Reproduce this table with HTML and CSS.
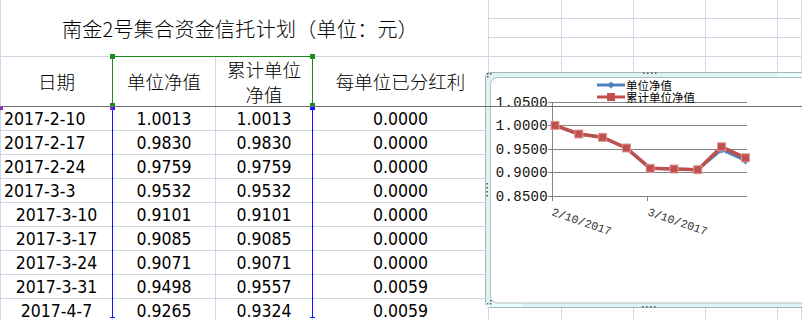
FILE: index.html
```html
<!DOCTYPE html>
<html lang="zh">
<head>
<meta charset="utf-8">
<title>南金2号集合资金信托计划</title>
<link rel="stylesheet" href="styles.css">
</head>
<body>
<div class="sheet">
  <div class="grid">
    <div class="cell first title">南金2号集合资金信托计划（单位：元）</div>
    <div class="cell"></div><div class="cell"></div><div class="cell"></div><div class="cell"></div><div class="cell"></div>
    <div class="cell"></div><div class="cell"></div><div class="cell"></div><div class="cell"></div><div class="cell"></div>
    <div class="cell"></div><div class="cell"></div><div class="cell"></div><div class="cell"></div><div class="cell"></div>

    <div class="cell first head">日期</div>
    <div class="cell head">单位净值</div>
    <div class="cell head">累计单位净值</div>
    <div class="cell head">每单位已分红利</div>
    <div class="cell"></div><div class="cell"></div><div class="cell"></div><div class="cell"></div><div class="cell"></div>

    <div class="cell first num left">2017-2-10</div><div class="cell num">1.0013</div><div class="cell num">1.0013</div><div class="cell num">0.0000</div>
    <div class="cell"></div><div class="cell"></div><div class="cell"></div><div class="cell"></div><div class="cell"></div>
    <div class="cell first num left">2017-2-17</div><div class="cell num">0.9830</div><div class="cell num">0.9830</div><div class="cell num">0.0000</div>
    <div class="cell"></div><div class="cell"></div><div class="cell"></div><div class="cell"></div><div class="cell"></div>
    <div class="cell first num left">2017-2-24</div><div class="cell num">0.9759</div><div class="cell num">0.9759</div><div class="cell num">0.0000</div>
    <div class="cell"></div><div class="cell"></div><div class="cell"></div><div class="cell"></div><div class="cell"></div>
    <div class="cell first num left">2017-3-3</div><div class="cell num">0.9532</div><div class="cell num">0.9532</div><div class="cell num">0.0000</div>
    <div class="cell"></div><div class="cell"></div><div class="cell"></div><div class="cell"></div><div class="cell"></div>
    <div class="cell first num">2017-3-10</div><div class="cell num">0.9101</div><div class="cell num">0.9101</div><div class="cell num">0.0000</div>
    <div class="cell"></div><div class="cell"></div><div class="cell"></div><div class="cell"></div><div class="cell"></div>
    <div class="cell first num">2017-3-17</div><div class="cell num">0.9085</div><div class="cell num">0.9085</div><div class="cell num">0.0000</div>
    <div class="cell"></div><div class="cell"></div><div class="cell"></div><div class="cell"></div><div class="cell"></div>
    <div class="cell first num">2017-3-24</div><div class="cell num">0.9071</div><div class="cell num">0.9071</div><div class="cell num">0.0000</div>
    <div class="cell"></div><div class="cell"></div><div class="cell"></div><div class="cell"></div><div class="cell"></div>
    <div class="cell first num">2017-3-31</div><div class="cell num">0.9498</div><div class="cell num">0.9557</div><div class="cell num">0.0059</div>
    <div class="cell"></div><div class="cell"></div><div class="cell"></div><div class="cell"></div><div class="cell"></div>
    <div class="cell first num">2017-4-7</div><div class="cell num">0.9265</div><div class="cell num">0.9324</div><div class="cell num">0.0059</div>
    <div class="cell"></div><div class="cell"></div><div class="cell"></div><div class="cell"></div><div class="cell"></div>
  </div>

  <!-- chart data range highlights -->
  <div class="sel-green"></div>
  <div class="sel-blue sel-blue-l"></div>
  <div class="sel-blue sel-blue-r"></div>
  <div class="handle h-green h-g1"></div>
  <div class="handle h-green h-g2"></div>
  <div class="handle h-green h-g3"></div>
  <div class="handle h-green h-g4"></div>
  <div class="handle h-purple h-p1"></div>
  <div class="handle h-purple h-p2"></div>
  <div class="handle h-blue h-b1"></div>
  <div class="handle h-blue h-b2"></div>
  <div class="foot foot-l"></div>
  <div class="foot foot-r"></div>

  <!-- embedded chart -->
  <div class="chart">
    <svg width="317" height="236" viewBox="485 72 317 236" xmlns="http://www.w3.org/2000/svg">
      <rect x="485.5" y="72.5" width="340" height="235" rx="4" fill="#def3f3" stroke="#a9b6b6"/>
      <rect x="777" y="73" width="40" height="4" fill="#e9ffff"/>
      <rect x="486" y="303" width="36" height="4" fill="#e9ffff"/>
      <rect x="490.5" y="77.5" width="340" height="225.5" rx="7" fill="#ffffff" stroke="#b6bebe"/>
      <g fill="#555">
        <rect x="487" y="73" width="1.5" height="1.5"/><rect x="490" y="73" width="1.5" height="1.5"/>
        <rect x="487" y="76" width="1.5" height="1.5"/>
        <rect x="643" y="72.5" width="1.5" height="1.5"/><rect x="647" y="72.5" width="1.5" height="1.5"/>
        <rect x="651" y="72.5" width="1.5" height="1.5"/><rect x="655" y="72.5" width="1.5" height="1.5"/>
        <rect x="642" y="306" width="1.5" height="1.5"/><rect x="646" y="306" width="1.5" height="1.5"/>
        <rect x="650" y="306" width="1.5" height="1.5"/><rect x="654" y="306" width="1.5" height="1.5"/>
        <rect x="486.5" y="183" width="1.5" height="1.5"/><rect x="486.5" y="187" width="1.5" height="1.5"/>
        <rect x="486.5" y="191" width="1.5" height="1.5"/><rect x="486.5" y="195" width="1.5" height="1.5"/>
        <rect x="490" y="300" width="1.5" height="1.5"/><rect x="487" y="303" width="1.5" height="1.5"/>
        <rect x="490" y="303" width="1.5" height="1.5"/>
      </g>

      <!-- grid lines -->
      <g stroke="#868686" stroke-width="1" fill="none">
        <path d="M548 102.5H747M548 125.5H747M548 149.5H747M548 172.5H747M548 196.5H747"/>
        <path d="M552.5 102V201M647.5 196V201"/>
      </g>

      <!-- y axis labels -->
      <g class="ylab" font-size="14" text-anchor="end" fill="#111">
        <text x="548" y="107">1.0500</text>
        <text x="548" y="130">1.0000</text>
        <text x="548" y="154">0.9500</text>
        <text x="548" y="177">0.9000</text>
        <text x="548" y="201">0.8500</text>
      </g>

      <!-- x axis labels -->
      <g class="xlab" font-size="11.5" fill="#333">
        <text x="551" y="215" transform="rotate(19 551 215)">2/10/2017</text>
        <text x="647" y="215" transform="rotate(19 647 215)">3/10/2017</text>
      </g>

      <!-- blue series: 单位净值 -->
      <polyline fill="none" stroke="#4f81bd" stroke-width="3" stroke-linejoin="round"
        points="555,125.4 578.8,134 602.6,137.3 626.4,148 650.2,168.3 674,169 697.8,169.7 721.6,149.6 745.4,160.5"/>
      <g fill="#4f81bd">
        <path d="M721.6 145.6l4 4-4 4-4-4z"/>
        <path d="M745.4 156.5l4 4-4 4-4-4z"/>
      </g>

      <!-- red series: 累计单位净值 -->
      <polyline fill="none" stroke="#c0504d" stroke-width="3.5" stroke-linejoin="round"
        points="555,125.4 578.8,134 602.6,137.3 626.4,148 650.2,168.3 674,169 697.8,169.7 721.6,146.8 745.4,157.8"/>
      <g fill="#c0504d" stroke="#dd9a98" stroke-width="1">
        <rect x="551" y="121.4" width="8" height="8"/>
        <rect x="574.8" y="130" width="8" height="8"/>
        <rect x="598.6" y="133.3" width="8" height="8"/>
        <rect x="622.4" y="144" width="8" height="8"/>
        <rect x="646.2" y="164.3" width="8" height="8"/>
        <rect x="670" y="165" width="8" height="8"/>
        <rect x="693.8" y="165.7" width="8" height="8"/>
        <rect x="717.6" y="142.8" width="8" height="8"/>
        <rect x="741.4" y="153.8" width="8" height="8"/>
      </g>

      <!-- legend keys -->
      <path d="M597 85H625" stroke="#4f81bd" stroke-width="3"/>
      <path d="M611 81.5l3.5 3.5-3.5 3.5-3.5-3.5z" fill="#4f81bd"/>
      <path d="M597 97H625" stroke="#c0504d" stroke-width="3"/>
      <rect x="607" y="93" width="8" height="8" fill="#c0504d"/>
    </svg>
    <div class="legend">单位净值
累计单位净值</div>
  </div>

  <div class="freeze"></div>
</div>
</body>
</html>
```

FILE: styles.css
```css
html, body {
  margin: 0;
  padding: 0;
  width: 802px;
  height: 320px;
  overflow: hidden;
  background: #ffffff;
}

.sheet {
  position: relative;
  width: 802px;
  height: 320px;
  overflow: hidden;
}

.grid {
  display: grid;
  grid-template-columns: 113px 103px 97px 176px 73px 72px 72px 72px 1fr;
  grid-template-rows: 19px 19px 19px 50px repeat(9, 24px);
}

.cell {
  box-sizing: border-box;
  border-right: 1px solid #d0d7e5;
  border-bottom: 1px solid #d0d7e5;
  color: #000;
  white-space: nowrap;
  overflow: hidden;
}

.first {
  border-left: 1px solid #d0d7e5;
}

.title {
  grid-column: 1 / 5;
  grid-row: 1 / 4;
  display: flex;
  align-items: center;
  justify-content: center;
  padding-right: 9px;
  font-family: "Noto Sans CJK SC", sans-serif;
  font-weight: 300;
  font-size: 20px;
  letter-spacing: 0.3px;
}

.head {
  display: flex;
  align-items: center;
  justify-content: center;
  text-align: center;
  white-space: normal;
  padding: 0 10px;
  font-family: "Noto Sans CJK SC", sans-serif;
  font-weight: 300;
  font-size: 18.5px;
  line-height: 25px;
}

.num {
  display: flex;
  align-items: center;
  justify-content: center;
  font-family: "DejaVu Sans Condensed", "DejaVu Sans", sans-serif;
  font-stretch: condensed;
  font-size: 17.5px;
  padding-top: 1px;
}

.num.left {
  justify-content: flex-start;
  padding-left: 3px;
}

/* chart range highlighting */
.sel-green {
  position: absolute;
  left: 112px;
  top: 56px;
  width: 201px;
  height: 51px;
  box-sizing: border-box;
  border: 1px solid #1e8a1e;
}

.sel-blue {
  position: absolute;
  top: 107px;
  width: 1px;
  height: 211px;
  background: #1010ff;
}
.sel-blue-l { left: 112px; }
.sel-blue-r { left: 312px; }

.handle {
  position: absolute;
  width: 5px;
  height: 4px;
}
.h-green { background: #1e8a1e; }
.h-purple { background: #8a2bd0; }
.h-blue { background: #1010ff; }

.h-g1 { left: 110px; top: 54px; height: 5px; }
.h-g2 { left: 310px; top: 54px; height: 5px; }
.h-g3 { left: 110px; top: 103px; height: 3px; }
.h-g4 { left: 310px; top: 103px; height: 3px; }
.h-p1 { left: 0; top: 106px; width: 3px; }
.h-p2 { left: 110px; top: 106px; width: 3px; }
.h-b1 { left: 113px; top: 106px; width: 2px; }
.h-b2 { left: 310px; top: 106px; }

.foot {
  position: absolute;
  top: 317px;
  width: 5px;
  height: 1px;
  background: #1010ff;
}
.foot-l { left: 110px; }
.foot-r { left: 310px; }

.chart {
  position: absolute;
  left: 485px;
  top: 72px;
  width: 317px;
  height: 236px;
  z-index: 2;
}
.chart svg {
  display: block;
}

.legend {
  position: absolute;
  left: 141px;
  top: 6.5px;
  white-space: pre-line;
  font-family: "Noto Sans CJK SC", sans-serif;
  font-size: 11.5px;
  line-height: 12.5px;
  color: #000;
}

.ylab text {
  font-family: "Liberation Mono", "DejaVu Sans Mono", monospace;
  letter-spacing: 0.3px;
}
.xlab text {
  font-family: "Liberation Mono", "DejaVu Sans Mono", monospace;
}

.freeze {
  position: absolute;
  left: 0;
  right: 0;
  top: 106px;
  height: 1px;
  background: #6f6f6f;
  z-index: 3;
}
```
